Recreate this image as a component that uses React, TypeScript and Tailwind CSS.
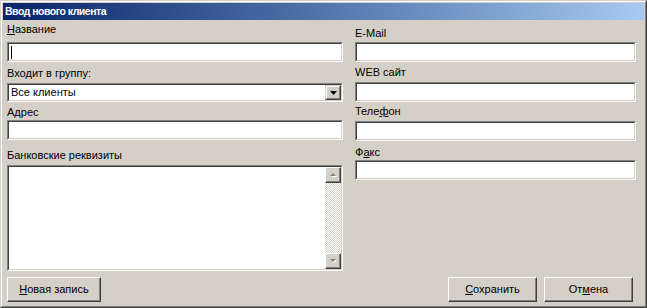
import type { ReactNode } from "react";

const font = "font-['Liberation_Sans',Arial,sans-serif] text-[11px] leading-[13px] text-black";

// утопленная рамка поля ввода в стиле Windows 2000
function Sunken({ className = "", children }: { className?: string; children?: ReactNode }) {
  return (
    <div className={`border border-t-[#808080] border-l-[#808080] border-r-white border-b-white ${className}`}>
      <div className="h-full w-full border border-t-[#404040] border-l-[#404040] border-r-[#d4d0c8] border-b-[#d4d0c8] bg-white">
        {children}
      </div>
    </div>
  );
}

function Label({ pt, h, children }: { pt: string; h: string; children: ReactNode }) {
  return <div className={`${h} ${pt} whitespace-nowrap`}>{children}</div>;
}

function Button({ w, children }: { w: string; children: ReactNode }) {
  return (
    <div className={`${w} h-[25px] border border-t-white border-l-white border-r-[#404040] border-b-[#404040]`}>
      <div className="h-full w-full flex items-center justify-center shadow-[inset_-1px_-1px_#808080] pb-[1px]">
        {children}
      </div>
    </div>
  );
}

function ScrollBtn({ up }: { up: boolean }) {
  return (
    <div className="h-[16px] w-[16px] border border-t-white border-l-white border-r-[#404040] border-b-[#404040] bg-[#d4d0c8]">
      <div className="h-full w-full flex items-center justify-center shadow-[inset_-1px_-1px_#808080]">
        <svg width="7" height="5" viewBox="0 0 7 5">
          {up ? (
            <>
              <path d="M1 4h6L4 1z" fill="#fff" />
              <path d="M0 3h6L3 0z" fill="#808080" />
            </>
          ) : (
            <>
              <path d="M1 1h6L4 4z" fill="#fff" />
              <path d="M0 0h6L3 3z" fill="#808080" />
            </>
          )}
        </svg>
      </div>
    </div>
  );
}

export default function App() {
  return (
    <div className={`w-[647px] h-[308px] bg-[#d4d0c8] ${font}`}>
      <div className="h-full w-full border border-t-[#d4d0c8] border-l-[#d4d0c8] border-r-[#404040] border-b-[#404040]">
        <div className="h-full w-full border border-t-white border-l-white border-r-[#808080] border-b-[#808080] p-[1px] flex flex-col">
          {/* Заголовок окна */}
          <div className="h-[17px] shrink-0 bg-gradient-to-r from-[#0a246a] to-[#a6caf0] flex items-center pl-[2px]">
            <span className="text-white font-bold text-[10.5px] leading-[13px] tracking-[-0.5px]">Ввод нового клиента</span>
          </div>

          <div className="flex flex-row pl-[4px]">
            {/* Левая колонка */}
            <div className="w-[336px] flex flex-col">
              <Label h="h-[22px]" pt="pt-[3px]">
                <u>Н</u>азвание
              </Label>
              <Sunken className="h-[20px]">
                <div className="ml-[2px] mt-[2px] w-[1px] h-[13px] bg-black" />
              </Sunken>
              <Label h="h-[21px]" pt="pt-[5px]">Входит в группу:</Label>
              <Sunken className="h-[19px]">
                <div className="flex h-full">
                  <div className="flex-1 pl-[2px] pt-[1px]">Все клиенты</div>
                  <div className="w-[16px] h-full border border-t-[#d4d0c8] border-l-[#d4d0c8] border-r-[#404040] border-b-[#404040] bg-[#d4d0c8]">
                    <div className="h-full w-full border border-t-white border-l-white border-r-[#808080] border-b-[#808080] flex items-center justify-center">
                      <svg width="7" height="4" viewBox="0 0 7 4">
                        <path d="M0 0h7L3.5 4z" fill="#000" />
                      </svg>
                    </div>
                  </div>
                </div>
              </Sunken>
              <Label h="h-[18px]" pt="pt-[4px]">
                А<u>д</u>рес
              </Label>
              <Sunken className="h-[20px]" />
              <Label h="h-[25px]" pt="pt-[9px]">Банковские реквизиты</Label>
              <Sunken className="h-[106px]">
                <div className="flex h-full justify-end">
                  <div className="w-[16px] h-full flex flex-col bg-[repeating-conic-gradient(#d4d0c8_0%_25%,#ffffff_0%_50%)] bg-[length:2px_2px]">
                    <ScrollBtn up />
                    <div className="flex-1" />
                    <ScrollBtn up={false} />
                  </div>
                </div>
              </Sunken>
            </div>

            {/* Правая колонка */}
            <div className="w-[281px] ml-[12px] flex flex-col">
              <Label h="h-[22px]" pt="pt-[7px]">E-Mail</Label>
              <Sunken className="h-[20px]" />
              <Label h="h-[20px]" pt="pt-[4px]">WEB сайт</Label>
              <Sunken className="h-[20px]" />
              <Label h="h-[19px]" pt="pt-[3px]">
                Теле<u>ф</u>он
              </Label>
              <Sunken className="h-[20px]" />
              <Label h="h-[19px]" pt="pt-[5px]">
                Ф<u>а</u>кс
              </Label>
              <Sunken className="h-[20px]" />
            </div>
          </div>

          {/* Кнопки */}
          <div className="flex flex-row mt-[6px] pl-[4px]">
            <Button w="w-[94px]">
              <span>
                <u>Н</u>овая запись
              </span>
            </Button>
            <div className="ml-[347px]">
              <Button w="w-[89px]">
                <span>
                  <u>С</u>охранить
                </span>
              </Button>
            </div>
            <div className="ml-[7px]">
              <Button w="w-[89px]">
                <span>
                  От<u>м</u>ена
                </span>
              </Button>
            </div>
          </div>
        </div>
      </div>
    </div>
  );
}
